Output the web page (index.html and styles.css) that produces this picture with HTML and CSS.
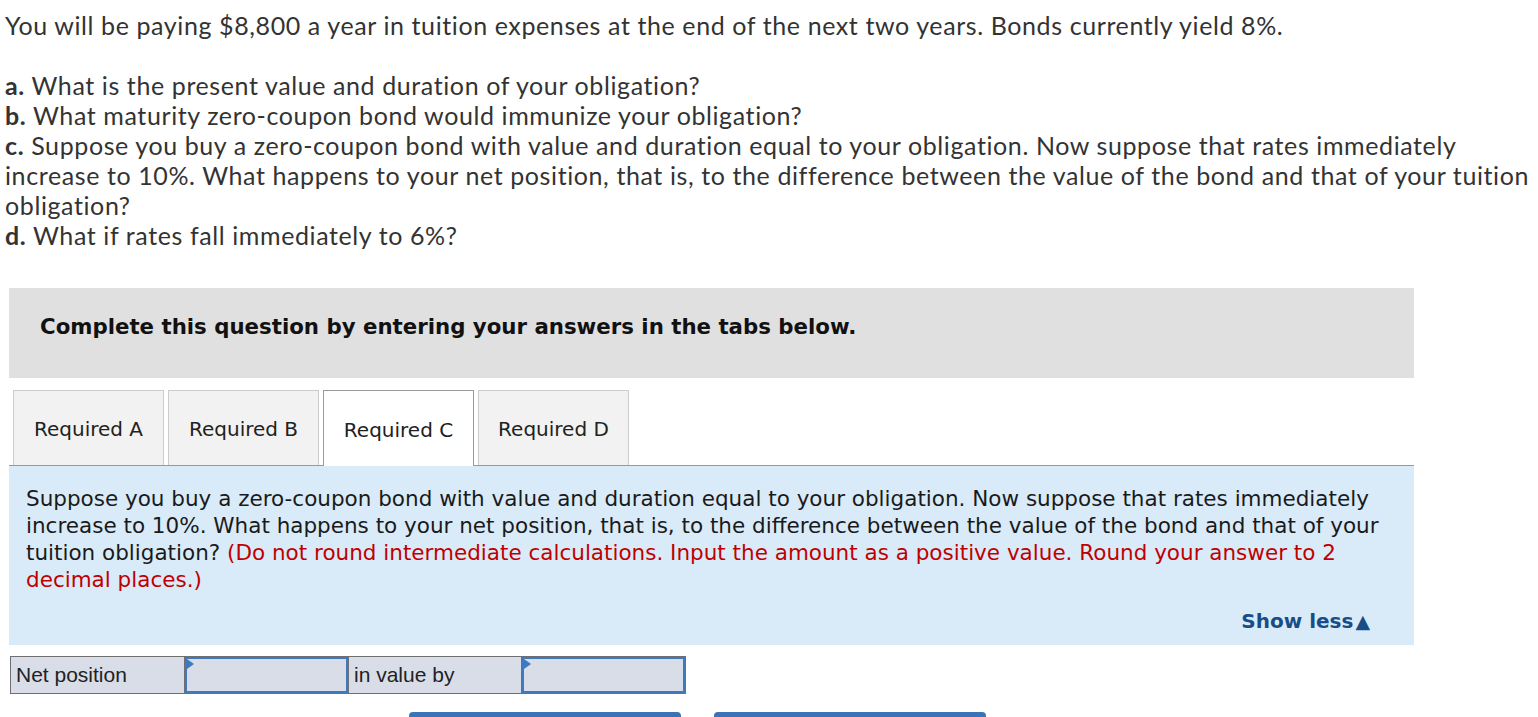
FILE: index.html
```html
<!DOCTYPE html>
<html lang="en">
<head>
<meta charset="utf-8">
<title>Question</title>
<link rel="stylesheet" href="styles.css">
</head>
<body>
<div class="page">
  <div class="prompt">
    <p class="intro">You will be paying $8,800 a year in tuition expenses at the end of the next two years. Bonds currently yield 8%.</p>
    <p class="parts"><b>a.</b> What is the present value and duration of your obligation?<br>
    <b>b.</b> What maturity zero-coupon bond would immunize your obligation?<br>
    <b>c.</b> Suppose you buy a zero-coupon bond with value and duration equal to your obligation. Now suppose that rates immediately increase to 10%. What happens to your net position, that is, to the difference between the value of the bond and that of your tuition obligation?<br>
    <b>d.</b> What if rates fall immediately to 6%?</p>
  </div>

  <div class="banner">Complete this question by entering your answers in the tabs below.</div>

  <div class="tabs">
    <div class="tab">Required A</div>
    <div class="tab">Required B</div>
    <div class="tab active">Required C</div>
    <div class="tab">Required D</div>
  </div>

  <div class="panel">
    <p class="panel-text">Suppose you buy a zero-coupon bond with value and duration equal to your obligation. Now suppose that rates immediately increase to 10%. What happens to your net position, that is, to the difference between the value of the bond and that of your tuition obligation? <span class="hint">(Do not round intermediate calculations. Input the amount as a positive value. Round your answer to 2 decimal places.)</span></p>
    <div class="show-less">Show less<span class="tri">&#9650;</span></div>
  </div>

  <div class="answer">
    <div class="cell label">Net position</div>
    <div class="cell input"><span class="flag"></span></div>
    <div class="cell label">in value by</div>
    <div class="cell input"><span class="flag"></span></div>
  </div>

  <div class="buttons">
    <div class="btn"></div>
    <div class="btn"></div>
  </div>
</div>
</body>
</html>
```
FILE: styles.css
```css
html, body {
  margin: 0;
  padding: 0;
  background: #fff;
}
.page {
  width: 1538px;
  height: 717px;
  overflow: hidden;
}
.prompt {
  padding: 10px 0 0 5px;
  width: 1530px;
  font-family: Lato, "Liberation Sans", sans-serif;
  font-size: 25px;
  letter-spacing: 0.6px;
  line-height: 30px;
  color: #333;
}
.prompt p {
  margin: 0;
}
.prompt b {
  font-weight: bold;
}
.prompt .intro {
  margin-bottom: 30px;
}
.banner {
  margin: 38px 0 0 9px;
  width: 1405px;
  height: 90px;
  box-sizing: border-box;
  padding: 0 0 14px 31px;
  display: flex;
  align-items: center;
  background: #e0e0e0;
  font-family: "DejaVu Sans", Verdana, sans-serif;
  font-weight: bold;
  font-size: 21.3px;
  color: #111;
}
.tabs {
  margin: 12px 0 0 9px;
  width: 1405px;
  display: flex;
  gap: 4px;
  padding-left: 4px;
  box-sizing: border-box;
  border-bottom: 1px solid #999;
}
.tab {
  width: 151px;
  height: 75px;
  box-sizing: border-box;
  border: 1px solid #ccc;
  border-bottom: none;
  background: #f2f2f2;
  display: flex;
  align-items: center;
  justify-content: center;
  font-family: "DejaVu Sans", Verdana, sans-serif;
  font-size: 20px;
  color: #222;
  padding-top: 2px;
}
.tab.active {
  background: #fff;
  border-color: #999;
  height: 76px;
  margin-bottom: -1px;
}
.panel {
  margin-left: 9px;
  width: 1405px;
  height: 179px;
  box-sizing: border-box;
  background: #d9ebf9;
  padding: 19px 30px 0 17px;
  font-family: "DejaVu Sans", Verdana, sans-serif;
  font-size: 21.5px;
  line-height: 27px;
  color: #1a1a1a;
}
.panel-text {
  margin: 0;
}
.hint {
  color: #c00000;
}
.show-less {
  margin-top: 15px;
  padding-right: 14px;
  text-align: right;
  font-weight: bold;
  font-size: 20px;
  color: #184d87;
}
.tri {
  font-size: 19px;
  margin-left: 2px;
}
.answer {
  margin: 11px 0 0 10px;
  display: flex;
  width: 676px;
  height: 38px;
  box-sizing: border-box;
  border: 1px solid #6f6f6f;
  background: #d9dde8;
}
.cell {
  box-sizing: border-box;
  height: 36px;
  display: flex;
  align-items: center;
  font-family: "Liberation Sans", Arial, sans-serif;
  font-size: 21px;
  color: #222;
}
.cell.label {
  padding-left: 5px;
}
.cell.label:first-child {
  width: 173px;
}
.cell.label:nth-child(3) {
  width: 173px;
  border-left: 1px solid #6f6f6f;
}
.cell.input {
  width: 165px;
  position: relative;
  border-left: 1px solid #6f6f6f;
  box-shadow: inset 0 0 0 2px #3f79c0;
}
.flag {
  position: absolute;
  left: 2px;
  top: 2px;
  width: 0;
  height: 0;
  border-top: 5px solid transparent;
  border-bottom: 5px solid transparent;
  border-left: 7px solid #3f79c0;
}
.buttons {
  margin: 18px 0 0 409px;
  display: flex;
  gap: 33px;
}
.btn {
  width: 272px;
  height: 40px;
  background: #3a74b7;
  border-radius: 4px 4px 0 0;
}
```
